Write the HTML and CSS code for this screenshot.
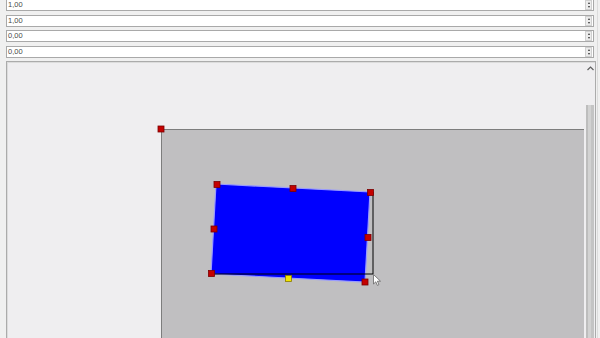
FILE: index.html
```html
<!DOCTYPE html>
<html>
<head>
<meta charset="utf-8">
<link rel="stylesheet" href="styles.css">
</head>
<body>
<div class="wrap">
  <div class="fields">
    <div class="field"><span class="val">1,00</span><span class="spin"><i class="up"></i><i class="dn"></i></span></div>
    <div class="field"><span class="val">1,00</span><span class="spin"><i class="up"></i><i class="dn"></i></span></div>
    <div class="field"><span class="val">0,00</span><span class="spin"><i class="up"></i><i class="dn"></i></span></div>
    <div class="field"><span class="val">0,00</span><span class="spin"><i class="up"></i><i class="dn"></i></span></div>
  </div>
  <div class="panel">
    <div class="view">
      <div class="canvas">
        <svg class="drawing" width="423" height="209" viewBox="161 129 423 209">
          <polygon points="216,184 370,192 365,282 211,274" fill="#0000ff" stroke="#9a9cff" stroke-width="1.2"/>
          <polyline points="373,192 373,274 211,274" fill="none" stroke="#000" stroke-width="1"/>
          <g fill="#c40000" stroke="#7a0000" stroke-width="0.8">
            <rect x="158" y="126" width="6" height="6"/>
            <rect x="214" y="181.5" width="6" height="6"/>
            <rect x="290" y="185.5" width="6" height="6"/>
            <rect x="367.5" y="189.5" width="6" height="6"/>
            <rect x="211" y="226" width="6" height="6"/>
            <rect x="365" y="234.5" width="6" height="6"/>
            <rect x="208.5" y="270.5" width="6" height="6"/>
            <rect x="362" y="279" width="6" height="6"/>
          </g>
          <rect x="285.5" y="275.5" width="6" height="6" fill="#f2e600" stroke="#8a7a00" stroke-width="0.8"/>
          <path d="M373.5 274.5 L373.5 284 L375.8 281.8 L377.4 285.4 L378.9 284.7 L377.4 281.2 L380.5 281.2 Z" fill="#fff" stroke="#555" stroke-width="0.7" stroke-linejoin="round"/>
        </svg>
      </div>
    </div>
    <div class="vscroll">
      <div class="arrow"><svg width="7" height="5" viewBox="0 0 7 5"><path d="M0.5 4 L3.5 1 L6.5 4" fill="none" stroke="#606060" stroke-width="1.2"/></svg></div>
      <div class="track"></div>
      <div class="thumb"></div>
    </div>
  </div>
</div>
</body>
</html>
```
FILE: styles.css
```css
html, body {
  margin: 0;
  padding: 0;
}
body {
  width: 600px;
  height: 338px;
  overflow: hidden;
  background: #f0f0f0;
  font-family: "Liberation Sans", Arial, sans-serif;
}
.wrap {
  margin-top: -1px;
  padding-left: 6px;
  position: relative;
}
.wrap::after {
  content: "";
  position: absolute;
  left: 597px;
  top: 0;
  width: 1px;
  height: 340px;
  background: #dcdcdc;
}
.fields {
  display: flex;
  flex-direction: column;
  gap: 3.5px;
}
.field {
  box-sizing: border-box;
  width: 588px;
  height: 12px;
  border: 1px solid #a9a9a9;
  background: #fff;
  display: flex;
  align-items: center;
  justify-content: space-between;
}
.val {
  font-size: 7.5px;
  color: #4a4a4a;
  padding-left: 1px;
  line-height: 10px;
}
.spin {
  box-sizing: border-box;
  width: 7px;
  height: 10px;
  margin-right: 1px;
  background: #ececec;
  border: 1px solid #d0d0d0;
  display: flex;
  flex-direction: column;
  align-items: center;
  justify-content: space-around;
}
.spin i {
  display: block;
  width: 0;
  height: 0;
  border-left: 1.5px solid transparent;
  border-right: 1.5px solid transparent;
}
.spin .up {
  border-bottom: 2px solid #333;
}
.spin .dn {
  border-top: 2px solid #333;
}
.panel {
  box-sizing: border-box;
  margin-top: 3.5px;
  width: 590px;
  height: 290px;
  border: 1px solid #ababab;
  box-shadow: inset 1px 1px 0 #dcdcdc;
  background: #efeef0;
  display: flex;
}
.view {
  flex: 1;
  padding-top: 67px;
  padding-left: 154px;
  overflow: hidden;
}
.canvas {
  width: 423px;
  height: 260px;
  background: #c0bfc1;
  border-top: 1px solid #7d7d7d;
  border-left: 1px solid #7d7d7d;
  box-sizing: border-box;
}
.drawing {
  display: block;
  overflow: visible;
  margin-left: -1px;
  margin-top: -1px;
}
.vscroll {
  width: 10px;
  position: relative;
  display: flex;
  flex-direction: column;
  align-items: center;
  padding-top: 3px;
  box-sizing: border-box;
}
.arrow {
  height: 6px;
  display: flex;
  align-items: center;
}
.track {
  height: 34px;
}
.thumb {
  width: 8px;
  flex: 1;
  background: linear-gradient(to right, #bdbdbd 0, #bdbdbd 2px, #d2d2d2 2px, #d2d2d2 5px, #c4c4c4 5px);
  margin-left: -1px;
}
```
